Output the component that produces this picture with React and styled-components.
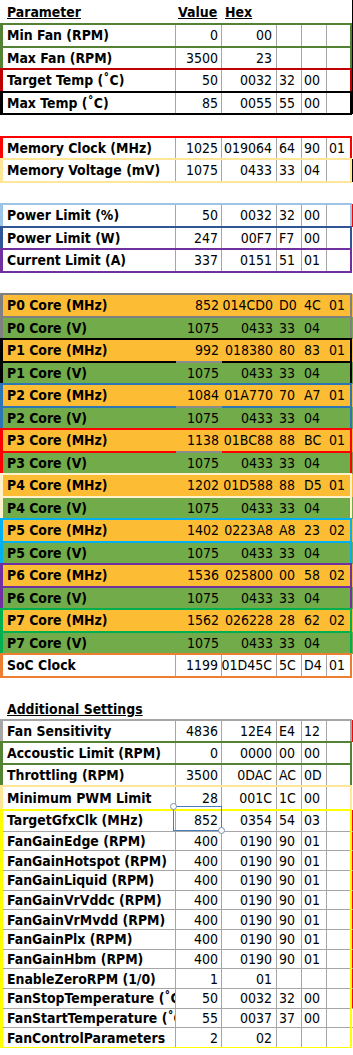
import styled, { createGlobalStyle } from 'styled-components';

const GRID = '#a6a6a6';
const ORANGE = '#fcbd34';
const GREEN = '#71ab4a';

const GlobalStyle = createGlobalStyle`
  body {
    margin: 0;
    background: #fff;
    color: #000;
    font-family: "DejaVu Sans Condensed", "DejaVu Sans", sans-serif;
    font-stretch: semi-condensed;
    font-size: 14px;
  }
`;

const Sheet = styled.div`
  width: 353px;
  display: flex;
  flex-direction: column;
`;

const Box = styled.div`
  position: relative;

  &::after {
    content: '';
    position: absolute;
    top: -1px;
    bottom: -1px;
    left: 0;
    right: 1px;
    border: 2px solid ${(p) => p.$color};
    border-left-width: 3px;
    pointer-events: none;
  }
`;

const Row = styled.div`
  display: grid;
  grid-template-columns: 176px 46px 55px 25px 25px 25px 1px;
  height: ${(p) => p.$h}px;
  box-sizing: border-box;
  background: ${(p) => p.$fill || 'transparent'};
  border-bottom: ${(p) => (p.$line ? `1px solid ${GRID}` : 'none')};
`;

const Label = styled.div`
  display: flex;
  align-items: center;
  padding-left: 7px;
  font-weight: bold;
  font-size: 13.9px;
  white-space: nowrap;
  overflow: hidden;
  border-right: ${(p) => (p.$grid ? `1px solid ${GRID}` : 'none')};
  text-decoration: ${(p) => (p.$title ? 'underline' : 'none')};
`;

const Cell = styled.div`
  position: relative;
  display: flex;
  align-items: center;
  justify-content: ${(p) => (p.$right ? 'flex-end' : 'flex-start')};
  padding: ${(p) => (p.$right ? `0 ${p.$pad}px 0 0` : `0 0 0 ${p.$pad}px`)};
  white-space: nowrap;
  border-right: ${(p) => (p.$grid ? `1px solid ${GRID}` : 'none')};
  font-weight: ${(p) => (p.$title ? 'bold' : 'normal')};
  text-decoration: ${(p) => (p.$title ? 'underline' : 'none')};

  ${(p) =>
    p.$mark &&
    `&::after {
      content: '';
      position: absolute;
      left: 0;
      right: 0;
      bottom: -1px;
      height: 2px;
      background: #8c8c8c;
      z-index: 1;
    }`}
`;

const Edge = styled.div`
  background: ${(p) => p.$color || 'transparent'};
`;

const Selection = styled.div`
  position: absolute;
  top: -4px;
  left: -3px;
  right: -1px;
  bottom: 0;
  border: 1px solid #4a7ebb;
  pointer-events: none;
  z-index: 2;
`;

const Handle = styled.span`
  position: absolute;
  width: 5px;
  height: 5px;
  border-radius: 50%;
  background: #fff;
  border: 1px solid #7d8fa9;
  ${(p) => (p.$end ? 'right: -4px; bottom: -4px;' : 'left: -4px; top: -4px;')}
`;

const r = (label, v, h, b1 = '', b2 = '', b3 = '', extra = {}) => ({ label, v, h, b: [b1, b2, b3], ...extra });

const DataRow = ({ row, h, fill, line, grid = true }) => (
  <Row $h={h} $fill={fill} $line={line}>
    <Label $grid={grid}>{row.label}</Label>
    <Cell $right $pad={3} $grid={grid} $mark={row.mark}>
      {row.v}
      {row.selected && (
        <Selection>
          <Handle />
          <Handle $end />
        </Selection>
      )}
    </Cell>
    <Cell $right $pad={4} $grid={grid}>{row.h}</Cell>
    {row.b.map((x, i) => (
      <Cell key={i} $pad={2} $grid={grid && i < 2}>{x}</Cell>
    ))}
    <Edge $color={row.edge} />
  </Row>
);

const Single = ({ color, row, h = 22.5 }) => (
  <Box $color={color}>
    <DataRow row={row} h={h} />
  </Box>
);

const Spacer = styled.div`
  height: ${(p) => p.$h}px;
`;

const pStates = [
  ['P0', '852', '014CD0', 'D0', '4C', '01', '#808080', false],
  ['P1', '992', '018380', '80', '83', '01', '#000', true],
  ['P2', '1084', '01A770', '70', 'A7', '01', '#2e75b6', true],
  ['P3', '1138', '01BC88', '88', 'BC', '01', '#ff0000', true],
  ['P4', '1202', '01D588', '88', 'D5', '01', '#fff2cc', false],
  ['P5', '1402', '0223A8', 'A8', '23', '02', '#00b0f0', false],
  ['P6', '1536', '025800', '00', '58', '02', '#7030a0', false],
  ['P7', '1562', '026228', '28', '62', '02', '#00b050', false],
];

const fanRows = [
  r('TargetGfxClk (MHz)', '852', '0354', '54', '03', '', { selected: true, edge: '#ff0000' }),
  r('FanGainEdge (RPM)', '400', '0190', '90', '01', '', { edge: '#ff0000' }),
  r('FanGainHotspot (RPM)', '400', '0190', '90', '01', '', { edge: '#ff0000' }),
  r('FanGainLiquid (RPM)', '400', '0190', '90', '01', '', { edge: '#ff0000' }),
  r('FanGainVrVddc (RPM)', '400', '0190', '90', '01', '', { edge: '#ff0000' }),
  r('FanGainVrMvdd (RPM)', '400', '0190', '90', '01', '', { edge: '#ff0000' }),
  r('FanGainPlx (RPM)', '400', '0190', '90', '01', '', { edge: '#ff0000' }),
  r('FanGainHbm (RPM)', '400', '0190', '90', '01', '', { edge: '#ff0000' }),
  r('EnableZeroRPM (1/0)', '1', '01', '', '', '', { edge: '#ff0000' }),
  r('FanStopTemperature (˚C)', '50', '0032', '32', '00', '', { edge: '#ff0000' }),
  r('FanStartTemperature (˚C)', '55', '0037', '37', '00'),
  r('FanControlParameters', '2', '02'),
];

export default function App() {
  return (
    <>
      <GlobalStyle />
      <Sheet>
        <Row $h={24}>
          <Label $title>Parameter</Label>
          <Cell $title $pad={2}>Value</Cell>
          <Cell $title $pad={3}>Hex</Cell>
          <Cell />
          <Cell />
          <Cell />
          <Edge $color="#000" />
        </Row>
        <Single color="#548235" row={r('Min Fan (RPM)', '0', '00', '', '', '', { edge: '#000' })} />
        <Single color="#548235" row={r('Max Fan (RPM)', '3500', '23', '', '', '', { edge: '#000' })} />
        <Single color="#c00000" row={r('Target Temp (˚C)', '50', '0032', '32', '00', '', { edge: '#000' })} />
        <Single color="#000" row={r('Max Temp (˚C)', '85', '0055', '55', '00', '', { edge: '#000' })} />
        <Spacer $h={22.5} />
        <Single color="#ff0000" row={r('Memory Clock (MHz)', '1025', '019064', '64', '90', '01')} />
        <Single color="#ffe699" row={r('Memory Voltage (mV)', '1075', '0433', '33', '04', '', { edge: '#000' })} />
        <Spacer $h={22.5} />
        <Single color="#9dc3e6" row={r('Power Limit (%)', '50', '0032', '32', '00', '', { edge: '#ff0000' })} />
        <Single color="#2f5597" row={r('Power Limit (W)', '247', '00F7', 'F7', '00')} />
        <Single color="#7030a0" row={r('Current Limit (A)', '337', '0151', '51', '01')} />
        <Spacer $h={22.5} />
        {pStates.map(([p, v, h, b1, b2, b3, color, mark]) => (
          <div key={p}>
            <Box $color={color}>
              <DataRow row={r(`${p} Core (MHz)`, v, h, b1, b2, b3, { mark })} h={22.5} fill={ORANGE} grid={false} />
            </Box>
            <Box $color={color}>
              <DataRow row={r(`${p} Core (V)`, '1075', '0433', '33', '04')} h={22.5} fill={GREEN} grid={false} />
            </Box>
          </div>
        ))}
        <Single color="#ed7d31" row={r('SoC Clock', '1199', '01D45C', '5C', 'D4', '01')} />
        <Spacer $h={21.5} />
        <Row $h={21.5}>
          <Label $title>Additional Settings</Label>
        </Row>
        <Single color="#a6a6a6" h={22} row={r('Fan Sensitivity', '4836', '12E4', 'E4', '12', '', { edge: '#ff0000' })} />
        <Single color="#548235" row={r('Accoustic Limit (RPM)', '0', '0000', '00', '00')} />
        <Single color="#548235" h={22} row={r('Throttling (RPM)', '3500', '0DAC', 'AC', '0D')} />
        <Single color="#ffe699" h={24} row={r('Minimum PWM Limit', '28', '001C', '1C', '00')} />
        <Box $color="#ffff00">
          {fanRows.map((row, i) => (
            <DataRow key={row.label} row={row} h={i === 0 ? 21.5 : 19.7} line={i < fanRows.length - 1} />
          ))}
        </Box>
      </Sheet>
    </>
  );
}
